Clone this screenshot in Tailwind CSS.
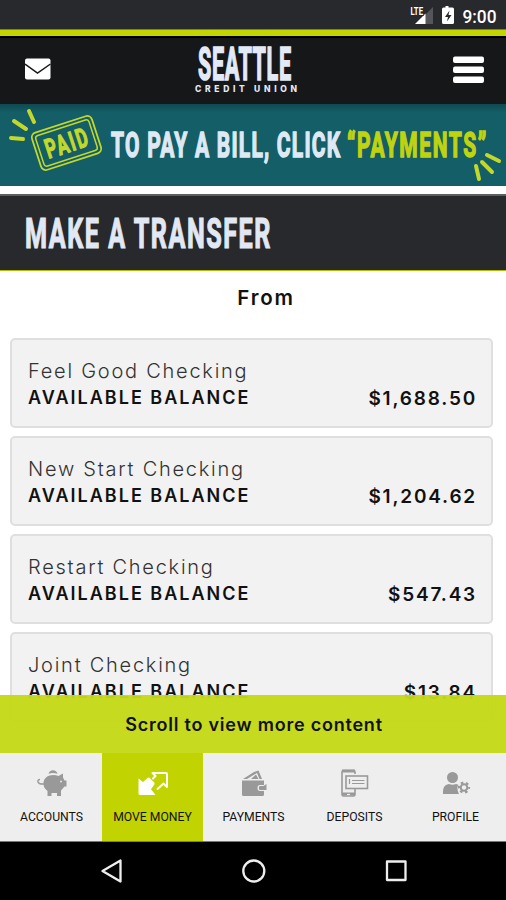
<!DOCTYPE html>
<html lang="en">
  <head>
    <meta charset="UTF-8" />
    <meta name="viewport" content="width=device-width, initial-scale=1.0" />
    <title>Make a Transfer</title>
    <script src="https://cdn.jsdelivr.net/npm/@tailwindcss/browser@4"></script>
  </head>
  <body class="bg-white">
    <div
      class="flex flex-col w-[506px] h-[900px] overflow-hidden font-['Inter',sans-serif] text-[#111]"
    >
      <!-- Status bar -->
      <div
        class="flex justify-end h-[29px] shrink-0 bg-[#27292c] font-['Roboto',sans-serif]"
      >
        <svg class="w-[96px] h-[29px]" viewBox="410 0 96 29">
          <path d="M433 7v17h-17z" fill="#54565a" />
          <path d="M425.5 13.5V24H415z" fill="#fff" />
          <text x="410.500" y="14.500" font-size="11" font-weight="700" fill="#fff" stroke="#27292c" stroke-width="2" paint-order="stroke" textLength="12.500" lengthAdjust="spacingAndGlyphs">LTE</text>
          <path d="M445.500 6h3v1.500h4q1.500 0 1.500 1.500v13.500q0 1.500-1.500 1.500h-9q-1.500 0-1.500-1.500V9q0-1.500 1.500-1.500h2z" fill="#fff" />
          <path d="M449.500 10.500l-4.500 6.500h3l-1 4.500 4.500-6.500h-3z" fill="#27292c" />
          <text x="462.500" y="22.500" font-size="18" font-weight="500" fill="#fff" textLength="34" lengthAdjust="spacingAndGlyphs">9:00</text>
        </svg>
      </div>
      <div class="h-[7px] shrink-0 bg-[#c3d600] border-t border-[#7d8715]"></div>

      <!-- Header -->
      <header
        class="flex justify-between h-[68px] shrink-0 bg-[#151719] border-t-2 border-black pl-[25px] pr-[22px]"
      >
        <svg class="w-[26px] h-[66px]" viewBox="25 38 26 66">
          <rect x="25" y="58.500" width="25.500" height="21" rx="2" fill="#fff" />
          <path d="M25 64l12.500 9 13-9" fill="none" stroke="#151719" stroke-width="1.500" />
        </svg>
        <svg class="w-[110px] h-[66px] -ml-[8px]" viewBox="194 38 110 66">
          <g transform="translate(199 80) scale(0.47 1)">
            <text font-family="Roboto" font-size="46" font-weight="700" fill="#e4eaf5" stroke="#e4eaf5" stroke-width="1.600" textLength="198">SEATTLE</text>
          </g>
          <text x="196" y="92" font-family="Inter" font-size="8.500" font-weight="800" fill="#e4eaf5" textLength="102">CREDIT UNION</text>
        </svg>
        <svg class="w-[31px] h-[66px]" viewBox="453 38 31 66">
          <rect x="453" y="56.500" width="31" height="6.500" rx="2" fill="#fff" />
          <rect x="453" y="66.500" width="31" height="6.500" rx="2" fill="#fff" />
          <rect x="453" y="76.500" width="31" height="6.500" rx="2" fill="#fff" />
        </svg>
      </header>

      <!-- Promo banner -->
      <div
        class="h-[82px] shrink-0 bg-[#135e67] bg-linear-to-b from-[#104950] to-[#135e67] to-10%"
      >
        <svg class="w-[506px] h-[82px]" viewBox="0 104 506 82" font-family="Roboto" font-weight="700">
          <g stroke="#c3d82a" stroke-width="4" stroke-linecap="round" fill="none">
            <path d="M29 111l5 11M14 121l12 8M11 138l12 1" />
            <path d="M487 155l12 6M482 162l10 10M476 166l3 13" />
          </g>
          <g transform="translate(66.500 143) rotate(-18)">
            <rect x="-31.500" y="-19.500" width="63" height="39" rx="5" fill="none" stroke="#c3d82a" stroke-width="1.800" />
            <rect x="-28" y="-16" width="56" height="32" rx="3" fill="none" stroke="#c3d82a" stroke-width="1.500" />
            <g transform="translate(-22 9.500) scale(0.64 1)">
              <text font-size="27" fill="#c3d82a" stroke="#c3d82a" stroke-width="1.200" textLength="68">PAID</text>
            </g>
          </g>
          <g transform="translate(111 157) scale(0.6 1)">
            <text font-size="35" fill="#dfe9f4" stroke="#dfe9f4" stroke-width="1.500" textLength="382">TO PAY A BILL, CLICK</text>
          </g>
          <g transform="translate(347 157) scale(0.6 1)">
            <text font-size="35" fill="#c0d310" stroke="#c0d310" stroke-width="1.500" textLength="232">“PAYMENTS”</text>
          </g>
        </svg>
      </div>

      <!-- Page title -->
      <div
        class="h-[77px] mt-[8px] shrink-0 bg-[#27292c] border-t-2 border-[#5d5e60] border-b border-b-[#aebf10]"
      >
        <svg class="w-[300px] h-[74px]" viewBox="0 196 300 74">
          <g transform="translate(25 248) scale(0.6 1)">
            <text font-family="Roboto" font-size="42" font-weight="700" fill="#e2e8f3" stroke="#e2e8f3" stroke-width="1.200" textLength="409">MAKE A TRANSFER</text>
          </g>
        </svg>
      </div>

      <main class="relative flex-1 min-h-0 overflow-hidden px-[10px] bg-white">
        <h2
          class="h-[67px] pt-[13px] pl-[26px] text-center text-[20.500px] leading-[28px] font-semibold tracking-[1.800px]"
        >
          From
        </h2>
        <div class="flex flex-col gap-[8px] w-[483px]">
          <div class="flex justify-between items-end h-[90px] shrink-0 px-[16px] pb-[15px] bg-[#f2f2f2] border-2 border-[#dfdfdf] rounded-[5px]">
            <div>
              <div class="h-[28px] text-[20px] leading-[28px] font-light tracking-[1.750px] text-[#333]">Feel Good Checking</div>
              <div class="text-[18px] leading-[26px] font-semibold tracking-[2px]">AVAILABLE BALANCE</div>
            </div>
            <div class="text-[19px] leading-[25px] font-semibold tracking-[1.800px] -mr-[2px]">$1,688.50</div>
          </div>
          <div class="flex justify-between items-end h-[90px] shrink-0 px-[16px] pb-[15px] bg-[#f2f2f2] border-2 border-[#dfdfdf] rounded-[5px]">
            <div>
              <div class="h-[28px] text-[20px] leading-[28px] font-light tracking-[1.750px] text-[#333]">New Start Checking</div>
              <div class="text-[18px] leading-[26px] font-semibold tracking-[2px]">AVAILABLE BALANCE</div>
            </div>
            <div class="text-[19px] leading-[25px] font-semibold tracking-[1.800px] -mr-[2px]">$1,204.62</div>
          </div>
          <div class="flex justify-between items-end h-[90px] shrink-0 px-[16px] pb-[15px] bg-[#f2f2f2] border-2 border-[#dfdfdf] rounded-[5px]">
            <div>
              <div class="h-[28px] text-[20px] leading-[28px] font-light tracking-[1.750px] text-[#333]">Restart Checking</div>
              <div class="text-[18px] leading-[26px] font-semibold tracking-[2px]">AVAILABLE BALANCE</div>
            </div>
            <div class="text-[19px] leading-[25px] font-semibold tracking-[1.800px] -mr-[2px]">$547.43</div>
          </div>
          <div class="flex justify-between items-end h-[90px] shrink-0 px-[16px] pb-[15px] bg-[#f2f2f2] border-2 border-[#dfdfdf] rounded-[5px]">
            <div>
              <div class="h-[28px] text-[20px] leading-[28px] font-light tracking-[1.750px] text-[#333]">Joint Checking</div>
              <div class="text-[18px] leading-[26px] font-semibold tracking-[2px]">AVAILABLE BALANCE</div>
            </div>
            <div class="text-[19px] leading-[25px] font-semibold tracking-[1.800px] -mr-[2px]">$13.84</div>
          </div>
        </div>

        <!-- Scroll hint laid over the list -->
        <div
          class="absolute inset-x-0 bottom-0 h-[58px] pl-[2px] bg-[#c4d917]/96 text-center text-[18px] leading-[59px] font-semibold tracking-[0.780px]"
        >
          Scroll to view more content
        </div>
      </main>

      <!-- Tab bar -->
      <nav
        class="grid grid-cols-5 h-[89px] pl-[1px] shrink-0 bg-[#eee] border-b border-[#777] font-['Roboto',sans-serif] text-[12.200px] leading-[16px] text-[#111] text-center"
      >
        <div class="flex flex-col items-center pt-[12px]">
          <svg class="w-[36px] h-[36px]" viewBox="33 765 36 36" fill="#999">
            <path d="M47.500 773.800q1-3.500 4.500-3.500t4.500 3.500q-4.500-1.500-9 0z" />
            <path d="M42.500 782q1-5 6-6.500 5-1 9 .5l4.500-2.500v4l1.500 3h2v6h-2l-3.500 4V796h-4v-3h-5.500v3h-4v-5q-5-4-4-9z" />
            <path d="M43 784q-5 .5-6-2-.5-2.500 2-2.500" fill="none" stroke="#999" stroke-width="1.500" />
            <circle cx="60" cy="781.500" r="0.900" fill="#eee" />
          </svg>
          <span class="mt-[8px]">ACCOUNTS</span>
        </div>
        <div class="flex flex-col items-center pt-[12px] bg-[#c1d300]">
          <svg class="w-[36px] h-[36px]" viewBox="134 765 36 36">
            <path d="M137.500 778.500l4.500 3.500 5-4.500 1.500.3 5 5v1.500l-3.500 5 4.500 5.700H139q-1.500 0-1.500-1.500z" fill="#fff" />
            <path d="M152 778.500l2.500-2.500-3-3H165q1 0 1 1V787l-3.500-3.500-6 5.500" fill="none" stroke="#fff" stroke-width="2" stroke-linejoin="round" stroke-linecap="round" />
          </svg>
          <span class="mt-[8px] whitespace-nowrap">MOVE MONEY</span>
        </div>
        <div class="flex flex-col items-center pt-[12px]">
          <svg class="w-[36px] h-[36px]" viewBox="235 765 36 36" fill="#999">
            <path d="M242 779l11-7 4.500-1.500 3.500 8.500h-2.500l-2.500-6-10 6z" />
            <path d="M250 779l5-4.500 2.500 4.500z" />
            <path d="M241 780.500h22V785h-4q-2.500 0-2.500 3t2.500 3h4v3.500q0 1.500-1.500 1.500h-19q-1.500 0-1.500-1.500z" />
            <path d="M258.500 786h4l3-2v6h-7q-1.500-2 0-4z" />
          </svg>
          <span class="mt-[8px]">PAYMENTS</span>
        </div>
        <div class="flex flex-col items-center pt-[12px]">
          <svg class="w-[36px] h-[36px]" viewBox="337 765 36 36" fill="none" stroke="#999">
            <path d="M355 774v-2q0-1.500-1.500-1.500H343.500q-1.500 0-1.500 1.500v22.500q0 1.500 1.500 1.500h10q1.500 0 1.500-1.500V789" stroke-width="1.600" />
            <path d="M342 771h13M342 794h13" stroke-width="3" />
            <rect x="346" y="776" width="21.500" height="12.500" stroke-width="1.600" fill="#eee" />
            <path d="M349.500 779v5M352 780.500h12.500M352 783.500h12.500" stroke-width="1.200" />
            <path d="M347 794.500h3" stroke="#eee" stroke-width="1.200" />
          </svg>
          <span class="mt-[8px]">DEPOSITS</span>
        </div>
        <div class="flex flex-col items-center pt-[12px]">
          <svg class="w-[36px] h-[36px]" viewBox="438 765 36 36" fill="#999">
            <circle cx="452.500" cy="777.500" r="5.500" />
            <path d="M443 794v-3q0-6 6-7 3.500 1.500 7 0l2.500.8q-2 5 .5 9.200z" />
            <circle cx="464" cy="787.500" r="6.500" fill="#eee" />
            <circle cx="464" cy="787.500" r="3.300" fill="none" stroke="#999" stroke-width="2" />
            <circle cx="464" cy="787.500" r="5" fill="none" stroke="#999" stroke-width="2.200" stroke-dasharray="2.500 2.736" stroke-dashoffset="1.200" />
          </svg>
          <span class="mt-[8px]">PROFILE</span>
        </div>
      </nav>

      <!-- Android navigation -->
      <div class="h-[58px] shrink-0 bg-black">
        <svg class="w-[506px] h-[58px]" viewBox="0 842 506 58" fill="none" stroke="#eee" stroke-width="2.300" stroke-linejoin="round">
          <path d="M102.500 871l18-10.500v21z" />
          <circle cx="253.800" cy="871" r="10.500" />
          <rect x="387" y="861.500" width="18.500" height="18.500" />
        </svg>
      </div>
    </div>
  </body>
</html>
